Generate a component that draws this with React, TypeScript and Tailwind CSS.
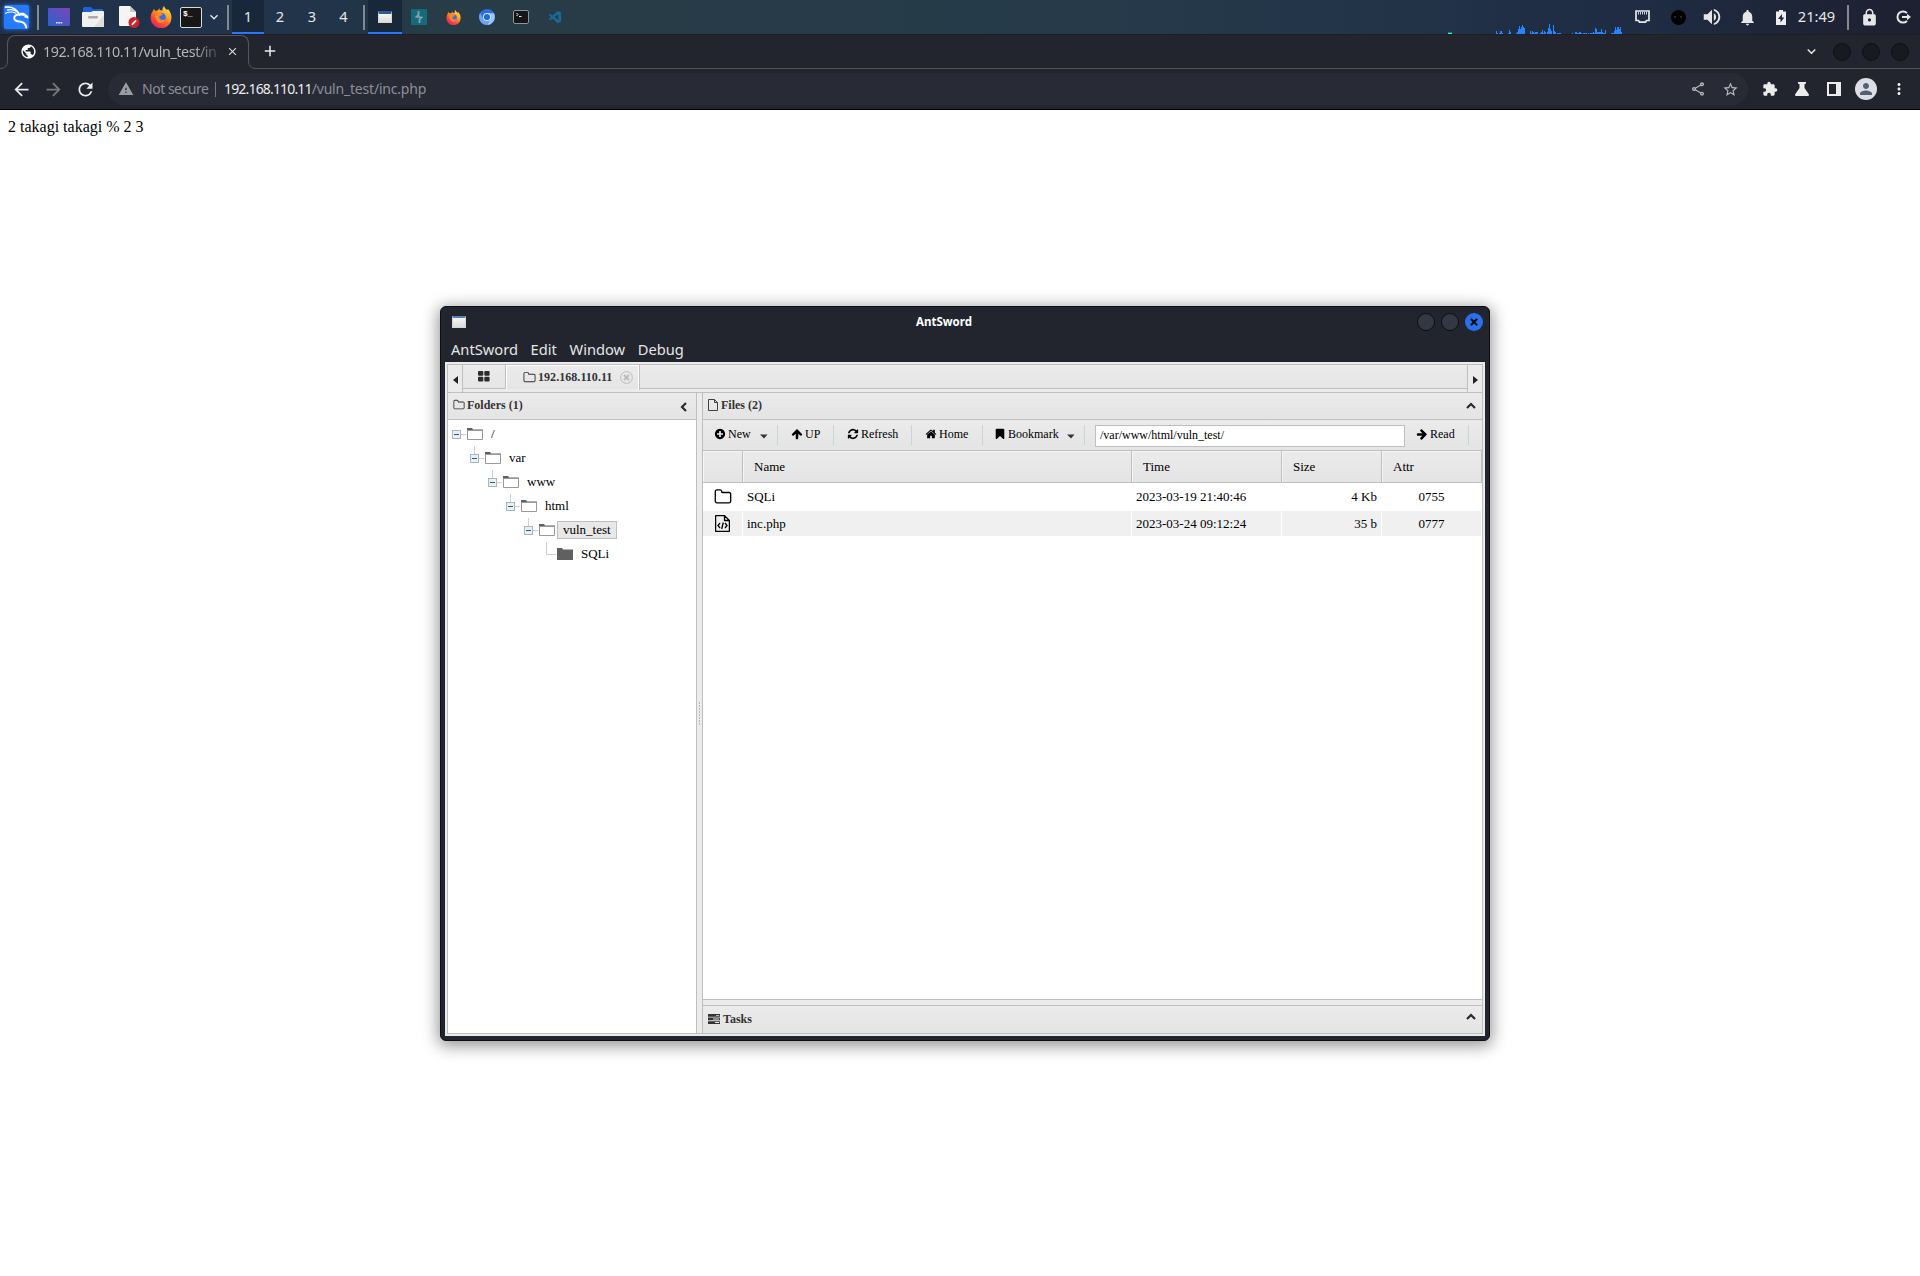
import React from "react";
import {
  MdAdd,
  MdArrowBack,
  MdArrowForward,
  MdClose,
  MdExtension,
  MdKeyboardArrowDown,
  MdLock,
  MdMoreVert,
  MdNotifications,
  MdOutlineShare,
  MdPerson,
  MdPublic,
  MdRefresh,
  MdStarBorder,
  MdVolumeUp,
  MdWarning,
} from "react-icons/md";
import { VscVscode } from "react-icons/vsc";

/* ---------- toolbar glyphs on a 1792 grid ---------- */

const GLYPHS = {
  plus: "M1344 960v-128q0-26-19-45t-45-19h-256v-256q0-26-19-45t-45-19h-128q-26 0-45 19t-19 45v256h-256q-26 0-45 19t-19 45v128q0 26 19 45t45 19h256v256q0 26 19 45t45 19h128q26 0 45-19t19-45v-256h256q26 0 45-19t19-45zm320-64q0 209-103 385.5t-279.5 279.5-385.5 103-385.5-103-279.5-279.5-103-385.5 103-385.5 279.5-279.5 385.5-103 385.5 103 279.5 279.5 103 385.5z",
  up: "M1675 971q0 51-37 90l-75 75q-38 38-91 38-54 0-90-38l-294-293v704q0 52-37.5 84.5t-90.5 32.5h-128q-53 0-90.5-32.5t-37.5-84.5v-704l-294 293q-36 38-90 38t-90-38l-75-75q-38-38-38-90 0-53 38-91l651-651q35-37 90-37 54 0 91 37l651 651q37 39 37 91z",
  right: "M1600 960q0 54-37 91l-651 651q-39 37-91 37-51 0-90-37l-75-75q-38-38-38-91t38-91l293-293h-704q-52 0-84.5-37.5t-32.5-90.5v-128q0-53 32.5-90.5t84.5-37.5h704l-293-294q-38-36-38-90t38-90l75-75q38-38 90-38 53 0 91 38l651 651q37 35 37 90z",
  refresh: "M1639 1056q0 5-1 7-64 268-268 434.5t-478 166.5q-146 0-282.5-55t-243.5-157l-129 129q-19 19-45 19t-45-19-19-45v-448q0-26 19-45t45-19h448q26 0 45 19t19 45-19 45l-137 137q71 66 161 102t187 36q134 0 250-65t186-179q11-17 53-117 8-23 30-23h192q13 0 22.5 9.5t9.5 22.5zm25-800v448q0 26-19 45t-45 19h-448q-26 0-45-19t-19-45 19-45l138-138q-148-137-349-137-134 0-250 65t-186 179q-11 17-53 117-8 23-30 23h-199q-13 0-22.5-9.5t-9.5-22.5v-7q65-268 270-434.5t480-166.5q146 0 284 55.5t245 156.5l130-129q19-19 45-19t45 19 19 45z",
  home: "M1472 992v480q0 26-19 45t-45 19h-384v-384h-256v384h-384q-26 0-45-19t-19-45v-480q0-1 .5-3t.5-3l575-474 575 474q1 2 1 6zm223-69l-62 74q-8 9-21 11h-3q-13 0-21-7l-692-577-692 577q-12 8-24 7-13-2-21-11l-62-74q-8-10-7-23.5t11-21.5l719-599q32-26 76-26t76 26l244 204v-195q0-14 9-23t23-9h192q14 0 23 9t9 23v408l219 182q10 8 11 21.5t-7 23.5z",
  bookmark: "M1420 128q23 0 44 9 33 13 52.5 41t19.5 62v1289q0 34-19.5 62t-52.5 41q-19 8-44 8-48 0-83-32l-441-424-441 424q-36 33-83 33-23 0-44-9-33-13-52.5-41t-19.5-62v-1289q0-34 19.5-62t52.5-41q21-9 44-9h1048z",
  folder: "M1600 1312v-704q0-40-28-68t-68-28h-704q-40 0-68-28t-28-68v-64q0-40-28-68t-68-28h-320q-40 0-68 28t-28 68v960q0 40 28 68t68 28h1216q40 0 68-28t28-68zm128-704v704q0 92-66 158t-158 66h-1216q-92 0-158-66t-66-158v-960q0-92 66-158t158-66h320q92 0 158 66t66 158v32h672q92 0 158 66t66 158z",
};

function Glyph({ name, className = "" }: { name: keyof typeof GLYPHS; className?: string }) {
  return (
    <svg viewBox="0 0 1792 1792" fill="currentColor" className={"shrink-0 " + className}>
      <path d={GLYPHS[name]} />
    </svg>
  );
}

/* ---------- desktop panel icons ---------- */

function KaliIcon() {
  return (
    <svg width="25" height="24" viewBox="0 0 25 24" fill="none" stroke="#fff" strokeLinecap="round" strokeLinejoin="round">
      <path d="M1.500 2.200Q7 1.400 11 4.200Q14.200 6.300 15.500 10" strokeWidth="1.700" />
      <path d="M3.500 5Q9 3.600 13 6.800" strokeWidth="1.300" />
      <path d="M1.500 8.300Q7 5.800 12 8.200" strokeWidth="1.100" />
      <path d="M23.500 12.200Q21.500 8.800 15.500 9.600Q10 9.800 10.200 13.200Q10.800 16.200 15.500 16.400Q21.500 17 22.300 22.500" strokeWidth="2" />
      <path d="M16 8.500L19.500 8.300L22 10.500" strokeWidth="1.300" />
      <path d="M21 10.500L24 12.800L21 12.200z" fill="#fff" strokeWidth=".6" />
    </svg>
  );
}

function DesktopIcon() {
  return (
    <svg width="22" height="18" viewBox="0 0 22 18">
      <defs>
        <linearGradient id="desk" x1="0" y1="1" x2="1" y2="0">
          <stop offset="0" stopColor="#2a62cf" />
          <stop offset="1" stopColor="#7a45b5" />
        </linearGradient>
      </defs>
      <rect width="22" height="18" rx="1" fill="url(#desk)" />
      <path d="M8 14h1.600v1.600H8zM10.300 14h1.600v1.600h-1.600zM12.600 14h1.600v1.600h-1.600z" fill="#e8eaf5" />
    </svg>
  );
}

function FolderIcon() {
  return (
    <svg width="22" height="20" viewBox="0 0 22 20">
      <path d="M1 1.500Q1 0 2.500 0H9l2 2h9q1 0 1 1v6H1z" fill="#1d62d8" />
      <path d="M0 6q0-1 1-1h8l2-1h10q1 0 1 1v14q0 1-1 1H1q-1 0-1-1z" fill="#f1f1f1" />
      <path d="M22 8v11q0 1-1 1H12z" fill="#dedede" />
      <rect x="6" y="9" width="10" height="2.500" rx="1.200" fill="#a9a9a9" />
    </svg>
  );
}

function DocIcon() {
  return (
    <svg width="21" height="22" viewBox="0 0 21 22">
      <path d="M0 1q0-1 1-1h10l6 6v13q0 1-1 1H1q-1 0-1-1z" fill="#f4f4f4" />
      <path d="M11 0l6 6h-6z" fill="#c9c9c9" />
      <circle cx="15" cy="16.500" r="5.500" fill="#cf1f28" />
      <path d="M12.800 18.800l4.300-4.400" stroke="#fff" strokeWidth="1.800" />
    </svg>
  );
}

function FirefoxIcon({ size, id }: { size: number; id: string }) {
  return (
    <svg width={size} height={size} viewBox="0 0 22 22">
      <defs>
        <linearGradient id={id} x1="0.85" y1="0.05" x2="0.25" y2="0.95">
          <stop offset="0" stopColor="#ffe04a" />
          <stop offset="0.4" stopColor="#ff9a22" />
          <stop offset="0.75" stopColor="#ff4438" />
          <stop offset="1" stopColor="#e0246c" />
        </linearGradient>
      </defs>
      <path
        d="M3 4.500L4 3l1.500 2L8 4.300 9.500 2v2l3 .5Q12 2 14 0q.5 2.500 3 4l1-1q3.500 4 3.500 8.500A10.500 10.500 0 0 1 .5 12Q.5 8 3 4.500z"
        fill={"url(#" + id + ")"}
      />
      <circle cx="11" cy="11.500" r="4.800" fill="#3f6ce0" />
      <path d="M5 7q3-2 5.500 0L13 8q-1.500 2-3.500 2-1 2 1 3.500 2.500 1 5-.5-1.500 4.500-5.500 4Q4.500 16 5 7z" fill="#ff8a25" />
    </svg>
  );
}

function ChromiumIcon() {
  return (
    <svg width="16" height="16" viewBox="0 0 16 16">
      <circle cx="8" cy="8" r="8" fill="#2a70e0" />
      <path d="M8 4.200h6.900A8 8 0 0 1 8 16l3.300-6.100A3.800 3.800 0 0 0 8 4.200z" fill="#9cc3fb" />
      <path d="M1.100 4A8 8 0 0 0 8 16l3.300-6.100a3.800 3.800 0 0 1-6.600 0z" fill="#6aa2f4" />
      <circle cx="8" cy="8" r="4" fill="#e9f1fd" />
      <circle cx="8" cy="8" r="3.100" fill="#1b6be6" />
    </svg>
  );
}

function TinyWindow({ className = "border-t-2 border-t-[#5580bb]" }: { className?: string }) {
  return (
    <span className={"block h-3 w-3.5 border border-[#d5d6d2] bg-gradient-to-b from-[#f6f6f4] to-[#dcddd8] " + className} />
  );
}

function EthernetIcon() {
  return (
    <svg width="15" height="14" viewBox="0 0 15 14" fill="none">
      <path d="M1 1h13v9.500h-2.500l-1 1.700h-6l-1-1.700H1z" stroke="#e8e8e8" strokeWidth="1.700" />
      <path d="M3.500 2v2.500M5.500 2v2.500M7.500 2v2.500M9.500 2v2.500M11.500 2v2.500" stroke="#cfcfcf" />
    </svg>
  );
}

function BatteryIcon() {
  return (
    <svg width="10" height="15" viewBox="0 0 10 15">
      <path fillRule="evenodd" d="M3 0h4v1.500h3V15H0V1.500h3zM6 4L2 9h2.500v3.500L8.300 7.500H6z" fill="#ededed" />
    </svg>
  );
}

function LogoutIcon() {
  return (
    <svg width="16" height="14" viewBox="0 0 16 14" fill="none" stroke="#e6e6e6" strokeWidth="2">
      <path d="M11 3A5.600 5.600 0 1 0 11 11" />
      <path d="M6 7h7" />
      <path d="M11 3.800L15 7l-4 3.200z" fill="#e6e6e6" stroke="none" />
    </svg>
  );
}

/* ---------- desktop panel ---------- */

const LOAD: [number, number][] = [
  [96, 3], [97, 1], [99, 1], [100, 3], [101, 3], [102, 1], [108, 1], [109, 4], [110, 2],
  [116, 1], [117, 2], [118, 5], [119, 8], [120, 5], [121, 7], [122, 9], [123, 7], [124, 6],
  [130, 3], [131, 1], [132, 3], [133, 2], [134, 1], [135, 2], [136, 2], [137, 2],
  [140, 1], [141, 2], [142, 4], [143, 1], [144, 3], [145, 2], [147, 2], [148, 6], [149, 10],
  [150, 5], [151, 3], [153, 9], [154, 3], [155, 2], [157, 1], [158, 1], [159, 1], [160, 1],
  [172, 1], [175, 2], [176, 2], [177, 1], [178, 1], [179, 2], [180, 2], [181, 1], [183, 1],
  [184, 1], [185, 1], [186, 1], [188, 1], [190, 1], [191, 1], [192, 1], [193, 2], [194, 1],
  [195, 6], [196, 5], [197, 2], [198, 2], [199, 2], [200, 2], [201, 5], [202, 2], [203, 1],
  [204, 1], [205, 4], [211, 1], [212, 1], [213, 1], [214, 3], [215, 7], [216, 4], [217, 7],
  [218, 7], [219, 5], [220, 7], [221, 2],
];

function Cell({ className = "w-[34px]", children }: { className?: string; children: React.ReactNode }) {
  return <div className={"flex h-[34px] shrink-0 items-center justify-center " + className}>{children}</div>;
}

function Sep({ className }: { className: string }) {
  return (
    <div className={"shrink-0 " + className}>
      <div className="h-[25px] w-0.5 bg-[#84898f]" />
    </div>
  );
}

function Panel() {
  return (
    <div className="flex h-[34px] items-center bg-[linear-gradient(90deg,#1f304a_0%,#22344b_14%,#223448_19%,#273c46_22%,#273c47_34%,#263b48_48%,#25394a_60%,#223348_74%,#1f2d45_80%,#1f2c44_86%,#1e2639_92%,#1d2031_100%)] font-['Noto_Sans',sans-serif] text-[14.6px] text-[#e6e6e6]">
      <Cell className="w-[34px] pr-px">
        <div className="flex h-6 w-[25px] items-center justify-center rounded-[2px] bg-[#257bff] shadow-[0_0_4px_#2b74e8]">
          <KaliIcon />
        </div>
      </Cell>
      <Sep className="w-2 pl-[3px]" />
      <Cell><DesktopIcon /></Cell>
      <Cell><FolderIcon /></Cell>
      <Cell className="ml-0.5 w-[34px]"><DocIcon /></Cell>
      <Cell className="w-[30px]"><FirefoxIcon size={22} id="fx-large" /></Cell>
      <Cell className="w-[30px]">
        <div className="h-[21px] w-[22px] rounded-[2px] border border-[#d9d9d9] bg-[#171717] pl-0.5 font-['Liberation_Mono',monospace] text-[8px] leading-[12px] font-bold text-white">
          $_
        </div>
      </Cell>
      <Cell className="w-4"><MdKeyboardArrowDown className="size-4 shrink-0" /></Cell>
      <Sep className="w-2.5 pl-[5px]" />
      <Cell className="w-8 border-y-2 border-t-transparent border-b-[#2777ff] bg-[#18283a]">1</Cell>
      <Cell className="w-8">2</Cell>
      <Cell className="w-8">3</Cell>
      <Cell className="w-[31px]">4</Cell>
      <Sep className="w-[9px] pl-1" />
      <Cell className="w-[34px] border-y-2 border-t-transparent border-b-[#2777ff] bg-[#192838]">
        <TinyWindow className="border-t-[3px] border-t-[#2f5a94]" />
      </Cell>
      <Cell>
        <div className="flex size-4 items-center justify-center bg-[#146b7c]">
          <svg width="8" height="12" viewBox="0 0 8 12" fill="none" stroke="#87a4a9" strokeWidth="1.800">
            <path d="M3.500 0v4L1.500 5.800l5 .6L4.500 8.500V12" />
          </svg>
        </div>
      </Cell>
      <Cell><FirefoxIcon size={15} id="fx-small" /></Cell>
      <Cell><ChromiumIcon /></Cell>
      <Cell>
        <div className="h-3.5 w-4 rounded-[2px] border border-[#8f9393] bg-[#161616] pt-0.5 pl-0.5">
          <svg width="6" height="5" viewBox="0 0 6 5" fill="none" stroke="#eee"><path d="M.5 0l1.500 1.500L.5 3M3 3.500h2.500" /></svg>
        </div>
      </Cell>
      <Cell><VscVscode className="size-[15px] text-[#1b6796]" /></Cell>

      <svg width="174" height="34" className="ml-auto shrink-0" shapeRendering="crispEdges">
        <rect x="0" y="32" width="4" height="1" fill="#178080" />
        <rect x="0" y="33" width="4" height="1" fill="#1ff0d8" />
        {LOAD.map(([x, h]) => (
          <rect key={x} x={x - 48} y={34 - h} width="1" height={h} fill="#2684ff" />
        ))}
      </svg>
      <Cell className="ml-1 w-[34px] pr-0.5"><EthernetIcon /></Cell>
      <Cell className="ml-px w-[34px]">
        <div className="flex size-[15px] items-center justify-center gap-1 rounded-full bg-black">
          <i className="size-0.5 bg-[#222935]" />
          <i className="size-0.5 bg-[#222935]" />
        </div>
      </Cell>
      <Cell><MdVolumeUp className="size-[22px]" /></Cell>
      <Cell className="ml-px w-[34px]"><MdNotifications className="size-[19px]" /></Cell>
      <Cell><BatteryIcon /></Cell>
      <Cell className="w-[37px] text-[14.6px]">21:49</Cell>
      <Sep className="w-[17px] pl-3" />
      <Cell><MdLock className="size-[19px]" /></Cell>
      <Cell className="w-[34px] pl-0.5"><LogoutIcon /></Cell>
    </div>
  );
}

/* ---------- browser chrome ---------- */

function Flare({ flip = false }: { flip?: boolean }) {
  return (
    <svg width="8" height="8" viewBox="0 0 8 8" fill="none" className={"relative top-px shrink-0 self-end " + (flip ? "-scale-x-100" : "")}>
      <path d="M0 8V7.500Q7.500 7.500 7.500 0H8V8z" fill="#23252e" />
      <path d="M0 7.500Q7.500 7.500 7.500 0" stroke="#55575d" />
    </svg>
  );
}

function ToolCell({ children }: { children: React.ReactNode }) {
  return <div className="flex h-8 w-8 shrink-0 items-center justify-center">{children}</div>;
}

function Browser() {
  return (
    <div className="h-[76px] border-t border-b border-t-[#1d1e25] border-b-black bg-[#23252e] font-['Noto_Sans',sans-serif] text-[14.6px] text-[#ececec]">
      <div className="flex h-[34px] items-stretch border-b border-[#505258]">
        <Flare />
        <div className="-mx-px -mb-px flex w-[242px] items-center rounded-t-lg border border-b-0 border-[#55575d] bg-[#23252e] pb-0.5 pl-3">
          <MdPublic className="size-[17px] shrink-0 text-white" />
          <div className="ml-1.5 w-[180px] shrink-0 text-[14.3px] whitespace-nowrap tracking-[-0.42px] text-[#b4b5b9] [mask-image:linear-gradient(90deg,#000_84%,rgba(0,0,0,0.15)_98%)]">
            192.168.110.11/vuln_test/in
          </div>
          <MdClose className="ml-[3px] size-[13px] shrink-0 text-[#dedede]" />
        </div>
        <Flare flip />
        <div className="ml-[5px] flex items-center pb-px"><MdAdd className="size-[18px]" /></div>
        <div className="mr-[11px] ml-auto flex items-center">
          <MdKeyboardArrowDown className="mr-[13px] size-[17px]" />
          <i className="size-[18px] rounded-full border border-[#101115] bg-[#191a1f]" />
          <i className="mx-[11px] size-[18px] rounded-full border border-[#101115] bg-[#191a1f]" />
          <i className="size-[18px] rounded-full border border-[#101115] bg-[#191a1f]" />
        </div>
      </div>
      <div className="flex h-10 items-center pl-[5.5px]">
        <ToolCell><MdArrowBack className="size-[21px]" /></ToolCell>
        <ToolCell><MdArrowForward className="size-[21px] text-[#77797f]" /></ToolCell>
        <ToolCell><MdRefresh className="size-[21px]" /></ToolCell>
        <div className="ml-[6.5px] flex h-8 w-[1640px] items-center rounded-full bg-[#282a36] pl-2.5">
          <MdWarning className="size-4 shrink-0 text-[#9a9ca2]" />
          <span className="ml-2 w-[73px] pb-px text-[14px] tracking-[-0.48px] whitespace-nowrap text-[#8d8f96]">Not secure</span>
          <span className="h-[15px] w-px bg-[#76787e]" />
          <span className="ml-2 pb-px text-[14px] whitespace-nowrap tracking-[-0.2px] text-[#8d8f96]">
            <span className="tracking-[-0.83px] text-[#ececec]">192.168.110.11</span>/vuln_test/inc.php
          </span>
          <div className="mr-[2px] ml-auto flex">
            <ToolCell><MdOutlineShare className="size-4 text-[#b9babd]" /></ToolCell>
            <ToolCell><MdStarBorder className="size-[17px] text-[#b9babd]" /></ToolCell>
          </div>
        </div>
        <div className="ml-1.5 flex">
          <ToolCell><MdExtension className="size-4" /></ToolCell>
          <ToolCell>
            <svg width="14" height="14" viewBox="0 0 14 14" fill="#ececec">
              <path d="M3 0h8v1.500L9.500 2.300V6L14 12.500Q14 14 13 14H1Q0 14 0 12.500L4.500 6V2.300L3 1.500z" />
            </svg>
          </ToolCell>
          <ToolCell>
            <svg width="14" height="14" viewBox="0 0 14 14"><path fillRule="evenodd" d="M0 0h14v14H0zM2 2v10h7V2z" fill="#ececec" /></svg>
          </ToolCell>
          <ToolCell>
            <div className="flex size-[22px] items-center justify-center rounded-full bg-[#dbdfe5]">
              <MdPerson className="size-[18px] text-[#536072]" />
            </div>
          </ToolCell>
          <ToolCell><MdMoreVert className="ml-px size-[18px]" /></ToolCell>
        </div>
      </div>
    </div>
  );
}

/* ---------- AntSword window ---------- */

function ChevronUp() {
  return (
    <svg width="10" height="7" viewBox="0 0 10 7" fill="none" stroke="#2b2b2b" strokeWidth="2.200"><path d="M1 6l4-4 4 4" /></svg>
  );
}

function Caret() {
  return <svg width="8" height="5" viewBox="0 0 8 5" fill="#333"><path d="M0 .5h7.500L4 4.500z" /></svg>;
}

function FileOutline() {
  return (
    <svg width="10" height="12" viewBox="0 0 10 12" fill="none" stroke="#404040" className="shrink-0">
      <path d="M.5.5h6l3 3v8h-9zM6.500.5v3h3" />
    </svg>
  );
}

const TREE = ["/", "var", "www", "html", "vuln_test", "SQLi"];
const INDENT = ["pl-0", "pl-[18px]", "pl-9", "pl-[54px]", "pl-[72px]", "pl-[90px]"];

function TreeRow({ label, level }: { label: string; level: number }) {
  const leaf = level === 5;
  return (
    <div className={"flex h-6 items-center " + INDENT[level]}>
      <svg width="15" height="24" viewBox="0 0 15 24" fill="none" className="shrink-0" shapeRendering="crispEdges">
        {level > 0 && <path d={leaf ? "M4.500 0v12.500" : "M4.500 0v8"} stroke="#cfcfcf" />}
        <path d={leaf ? "M4.500 12.500H14" : "M9 12.500h5"} stroke="#cfcfcf" />
        {!leaf && (
          <>
            <rect x=".5" y="8.500" width="8" height="8" rx="1" fill="#e8f0f5" stroke="#a3b8c2" />
            <path d="M2 12.500h5" stroke="#3f5866" />
          </>
        )}
      </svg>
      <svg width="16" height="12" viewBox="0 0 16 12" fill="none" className="shrink-0">
        <path d="M0 0h5l1 1.500h10V3H0z" fill="#606060" />
        {leaf ? <path d="M0 2h16v10H0z" fill="#606060" /> : <path d="M.5 2.500h15v9H.5z" fill="#fff" stroke="#999" />}
      </svg>
      {level === 4 ? (
        <span className="ml-0.5 flex h-[18px] w-[60px] items-center border border-[#bfbfbf] bg-[#e8e8e8] pl-[5px]">{label}</span>
      ) : (
        <span className="ml-2">{label}</span>
      )}
    </div>
  );
}

function ToolButton({ glyph, label, className, caret = false }: { glyph: keyof typeof GLYPHS; label: string; className: string; caret?: boolean }) {
  return (
    <div className={"flex h-5 items-center border-r border-[#c5d7db] pb-0.5 " + className}>
      <Glyph name={glyph} className="size-3" />
      <span className="ml-0.5">{label}</span>
      {caret && <span className="ml-auto pt-1 pr-[9px]"><Caret /></span>}
    </div>
  );
}

const HEAD = "flex items-center border-b border-[#bfbfbf] bg-gradient-to-b from-[#ebebeb] to-[#e4e4e4] pb-0.5 font-bold text-[#333]";

function Columns({ cells, className, border, cellPad }: { cells: React.ReactNode[]; className: string; border: string; cellPad: string[] }) {
  return (
    <div className={"grid grid-cols-[40px_389px_150px_100px_100px] " + className}>
      {cells.map((c, i) => (
        <div key={i} className={"flex items-center border-r " + border + " " + cellPad[i]}>{c}</div>
      ))}
    </div>
  );
}

function AntSword() {
  const rowPad = ["justify-center", "pl-1", "pl-1", "justify-end pr-1", "justify-center"];
  const headPad = ["", "pl-[11px]", "pl-[11px]", "pl-[11px]", "pl-[11px]"];
  return (
    <div className="absolute top-[306px] left-[440px] flex h-[735px] w-[1050px] flex-col rounded-[6px] border border-[#0d0f14] bg-[#23252e] px-1 pb-1 shadow-[0_3px_16px_2px_rgba(0,0,0,0.42)]">
      <div className="grid h-[30px] grid-cols-[464px_1fr_auto] items-center pr-0.5 pl-[7px] font-['Noto_Sans',sans-serif] text-white">
        <TinyWindow />
        <span className="text-[11.5px] font-bold">AntSword</span>
        <div className="flex justify-end gap-1.5">
          <i className="size-[18px] rounded-full border border-[#0d0f14] bg-[#343844]" />
          <i className="size-[18px] rounded-full border border-[#0d0f14] bg-[#343844]" />
          <i className="flex size-[18px] items-center justify-center rounded-full bg-[#2871ee]">
            <svg width="8" height="8" viewBox="0 0 8 8" stroke="#0b0d14" strokeWidth="2.200"><path d="M.8.8l6.400 6.400M7.200.8L.8 7.200" /></svg>
          </i>
        </div>
      </div>
      <div className="flex h-[25px] shrink-0 items-center gap-[12.700px] pb-0.5 pl-1.5 font-['Noto_Sans',sans-serif] text-[14.67px] text-[#e6e6e6]">
        <span>AntSword</span>
        <span>Edit</span>
        <span>Window</span>
        <span>Debug</span>
      </div>

      <div className="min-h-0 flex-1 bg-[#ebebeb] p-0.5 font-['Liberation_Serif',serif] text-[12px] text-black">
        <div className="flex h-full flex-col border border-[#bfbfbf]">
          {/* session tabs */}
          <div className="flex h-7 shrink-0 border-b border-[#bfbfbf]">
            <div className="flex w-[15px] items-center justify-center border-r border-[#bfbfbf] pt-0.5">
              <svg width="5" height="8" viewBox="0 0 5 8" fill="#222"><path d="M5 0v8L0 4z" /></svg>
            </div>
            <div className="flex h-6 flex-1 bg-gradient-to-b from-[#ebebeb] to-[#e5e5e5]">
              <div className="flex w-[43px] justify-center border-r border-b border-[#bfbfbf] pt-1.5">
                <svg width="12" height="11" viewBox="0 0 12 11" fill="#2b2b2b">
                  <rect width="5.300" height="4.700" rx="1" />
                  <rect x="6.300" width="5.300" height="4.700" rx="1" />
                  <rect y="5.700" width="5.300" height="4.700" rx="1" />
                  <rect x="6.300" y="5.700" width="5.300" height="4.700" rx="1" />
                </svg>
              </div>
              <div className="flex h-[25px] w-[134px] items-center border-r border-[#bfbfbf] pb-px pl-[17px] shadow-[inset_1px_1px_0_#fff,inset_-1px_0_0_#fff]">
                <Glyph name="folder" className="size-[13px] text-[#333]" />
                <span className="ml-0.5 font-bold tracking-[0.05px] text-[#333]">192.168.110.11</span>
                <svg width="13" height="13" viewBox="0 0 13 13" fill="none" stroke="#bdbdbd" className="ml-2">
                  <circle cx="6.500" cy="6.500" r="5.900" />
                  <path d="M4 4l5 5M9 4L4 9" strokeWidth="2" />
                </svg>
              </div>
              <div className="flex-1 border-b border-[#bfbfbf]" />
            </div>
            <div className="flex w-[15px] items-center justify-center border-l border-[#bfbfbf] pt-0.5">
              <svg width="5" height="8" viewBox="0 0 5 8" fill="#222"><path d="M0 0v8l5-4z" /></svg>
            </div>
          </div>

          <div className="flex min-h-0 flex-1">
            {/* folder tree */}
            <div className="flex w-[249px] flex-col border-r border-[#bfbfbf] bg-white">
              <div className={HEAD + " h-[27px] pr-[9px] pl-[5px]"}>
                <Glyph name="folder" className="size-3" />
                <span className="ml-0.5">Folders (1)</span>
                <svg width="7" height="10" viewBox="0 0 7 10" fill="none" stroke="#2b2b2b" strokeWidth="2.200" className="mt-1 ml-auto"><path d="M6 1L2 5l4 4" /></svg>
              </div>
              <div className="pt-0.5 pl-1 text-[13px]">
                {TREE.map((label, i) => <TreeRow key={label} label={label} level={i} />)}
              </div>
            </div>

            <div className="flex w-[5px] flex-col items-center justify-center bg-[#ebebeb]">
              <div className="flex flex-col gap-px">
                {[0, 1, 2, 3, 4, 5, 6, 7].map((i) => <i key={i} className="h-0.5 w-px bg-[#b9b9b9]" />)}
              </div>
            </div>

            <div className="flex min-w-0 flex-1 flex-col border-l border-[#bfbfbf]">
              <div className={HEAD + " h-[27px] pr-1.5 pl-[5px]"}>
                <FileOutline />
                <span className="ml-[3px]">Files (2)</span>
                <span className="ml-auto"><ChevronUp /></span>
              </div>
              <div className="flex h-[31px] shrink-0 items-start border-b border-[#bfbfbf] bg-gradient-to-b from-[#ebebeb] to-[#e4e4e4] pt-[5px]">
                <ToolButton glyph="plus" label="New" className="w-[75px] pl-[11px]" caret />
                <ToolButton glyph="up" label="UP" className="w-14 pl-[13px]" />
                <ToolButton glyph="refresh" label="Refresh" className="w-[78px] pl-[13px]" />
                <ToolButton glyph="home" label="Home" className="w-[71px] pl-[13px]" />
                <ToolButton glyph="bookmark" label="Bookmark" className="w-[102px] pl-[11px]" caret />
                <div className="ml-2.5 flex h-[22px] w-[310px] items-center border border-[#bfbfbf] bg-white pb-0.5 pl-1">/var/www/html/vuln_test/</div>
                <ToolButton glyph="right" label="Read" className="w-16 pl-[11px]" />
              </div>
              <div className="flex min-h-0 flex-1 flex-col border-b border-[#bfbfbf] bg-white text-[13px]">
                <Columns
                  className="h-8 shrink-0 border-b border-[#bfbfbf] bg-gradient-to-b from-[#ebebeb] to-[#e4e4e4]"
                  border="border-[#bfbfbf] shadow-[inset_1px_1px_0_#f4f4f4]"
                  cellPad={headPad}
                  cells={["", "Name", "Time", "Size", "Attr"]}
                />
                <Columns
                  className="h-7 shrink-0"
                  border="border-white"
                  cellPad={rowPad}
                  cells={[
                    <Glyph name="folder" className="size-[18px]" />,
                    "SQLi",
                    "2023-03-19 21:40:46",
                    "4 Kb",
                    "0755",
                  ]}
                />
                <Columns
                  className="h-[25px] shrink-0 bg-[#f0f0f0]"
                  border="border-white"
                  cellPad={rowPad}
                  cells={[
                    <svg width="15" height="17" viewBox="0 0 15 17" fill="none" stroke="#000" strokeWidth="1.300">
                      <path d="M.6 1.200q0-.6.6-.6h8.300l4.900 4.900v10.300q0 .6-.6.6H1.200q-.6 0-.6-.6zM9.500.6v4.900h4.900" />
                      <path d="M5 8L3 10.500 5 13M10 8l2 2.500L10 13M8.300 7.500l-1.600 6.500" />
                    </svg>,
                    "inc.php",
                    "2023-03-24 09:12:24",
                    "35 b",
                    "0777",
                  ]}
                />
              </div>
              <div className="h-[5px] shrink-0 bg-[#ebebeb]" />
              <div className="flex h-7 shrink-0 items-center border-t border-[#bfbfbf] bg-gradient-to-b from-[#ebebeb] to-[#e4e4e4] pr-1.5 pb-0.5 pl-[5px] font-bold text-[#333]">
                <svg width="12" height="10" viewBox="0 0 12 10" fill="#333" className="shrink-0">
                  <path fillRule="evenodd" d="M0 0h12v2.700H0zM8 .9v.9h3.200V.9zM0 3.600h12v2.700H0zM5 4.500v.9h6.200v-.9zM0 7.200h12v2.700H0zM7 8.100V9h4.200v-.9z" />
                </svg>
                <span className="ml-[3px]">Tasks</span>
                <span className="mb-1 ml-auto"><ChevronUp /></span>
              </div>
            </div>
          </div>
        </div>
      </div>
    </div>
  );
}

export default function App() {
  return (
    <div className="relative h-[1276px] w-[1920px] overflow-hidden bg-white">
      <Panel />
      <Browser />
      <div className="p-2 font-['Liberation_Serif',serif] text-[16px] leading-[18px] text-black">2 takagi takagi % 2 3</div>
      <AntSword />
    </div>
  );
}
